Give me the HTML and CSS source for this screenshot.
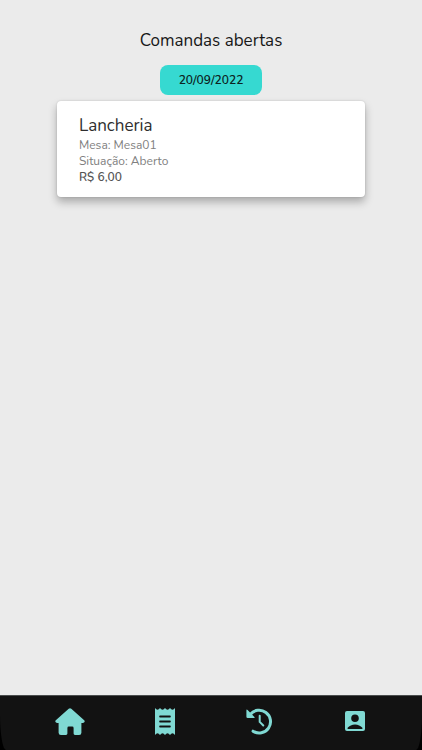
FILE: index.html
```html
<!DOCTYPE html>
<html lang="pt-BR">
<head>
<meta charset="utf-8">
<meta name="viewport" content="width=device-width, initial-scale=1">
<title>Comandas abertas</title>
<link rel="stylesheet" href="styles.css">
</head>
<body>
<main class="content">
  <h1 class="title">Comandas abertas</h1>
  <button class="date" type="button">20/09/2022</button>
  <article class="card">
    <h2 class="card-title">Lancheria</h2>
    <p class="card-line">Mesa: Mesa01</p>
    <p class="card-line">Situação: Aberto</p>
    <p class="card-line card-price">R$ 6,00</p>
  </article>
</main>
<nav class="tab-bar" aria-label="Principal">
  <div class="tabs">
    <a class="tab" href="#inicio" aria-label="Início">
      <svg width="30" height="28" viewBox="0 0 30 28"><path d="M13.7 .8Q15 -.3 16.3 .8L29.2 12.3Q30 13.2 29.5 14.1Q29.1 14.9 28 14.9H26.4V24.7Q26.4 27 24.1 27H20Q18.6 27 18.6 25.6V20Q18.6 18.6 17.2 18.6H13.8Q12.4 18.6 12.4 20V25.6Q12.4 27 11 27H6Q3.6 27 3.6 24.7V14.9H2Q.9 14.9.5 14.1Q0 13.2.8 12.3Z"/></svg>
    </a>
    <a class="tab" href="#comandas" aria-label="Comandas">
      <svg width="20" height="28" viewBox="0 0 20 28"><path fill-rule="evenodd" d="M0 0Q2.5 3.4 5 0Q7.5 3.4 10 0Q12.5 3.4 15 0Q17.5 3.4 20 0V27Q17.5 23.6 15 27Q12.5 23.6 10 27Q7.5 23.6 5 27Q2.5 23.6 0 27ZM5 7.6Q4.2 7.6 4.2 8.5T5 9.4H15Q15.8 9.4 15.8 8.5T15 7.6ZM5 12.6Q4.2 12.6 4.2 13.5T5 14.4H15Q15.8 14.4 15.8 13.5T15 12.6ZM5 17.6Q4.2 17.6 4.2 18.5T5 19.4H15Q15.8 19.4 15.8 18.5T15 17.6Z"/></svg>
    </a>
    <a class="tab" href="#historico" aria-label="Histórico">
      <svg width="28" height="28" viewBox="0 0 28 28"><path class="stroke arc" d="M4.2 6.5A11.4 11.4 0 1 1 7 23.2"/><path d="M1.6 2Q.4 1 .4 2.5V8.7Q.4 10 1.7 10H8Q9.4 10 8.4 9Z"/><path class="stroke hand" d="M13.7 7.7V13.9L17.3 17.5"/></svg>
    </a>
    <a class="tab" href="#perfil" aria-label="Perfil">
      <svg width="20" height="28" viewBox="0 0 20 28"><path fill-rule="evenodd" d="M2 3H18Q20 3 20 5V21Q20 23 18 23H2Q0 23 0 21V5Q0 3 2 3ZM10 6.5A3.8 3.8 0 1 0 10 14.1A3.8 3.8 0 1 0 10 6.5ZM2.6 21H17.4V19.8C15.7 17.7 13 16.4 10 16.4S4.3 17.7 2.6 19.8Z"/></svg>
    </a>
  </div>
</nav>
</body>
</html>
```
FILE: styles.css
```css
* {
  box-sizing: border-box;
}

body {
  margin: 0;
  min-height: 100vh;
  display: flex;
  flex-direction: column;
  background: #ebebeb;
  color: #181818;
  font-family: Nunito, Lato, sans-serif;
}

.content {
  flex: 1;
  display: flex;
  flex-direction: column;
  align-items: center;
  padding-top: 28px;
}

.title,
.card-title,
.card-line {
  margin: 0;
  font-weight: 400;
}

.title {
  font-size: 17px;
  line-height: 26px;
}

.date {
  margin: 11px 0 6px;
  padding: 0 19px;
  border: 0;
  border-radius: 8px;
  background: #36d9d1;
  color: #0c2322;
  font-family: inherit;
  font-size: 12px;
  font-weight: 600;
  line-height: 30px;
}

.card {
  width: 73%;
  padding: 12px 22px;
  border-radius: 4px;
  background: #fff;
  box-shadow: 0 5px 8px rgb(0 0 0 / 28%), 0 0 2px rgb(0 0 0 / 16%);
}

.card-title {
  font-size: 17px;
  line-height: 26px;
  color: #2e2e2e;
}

.card-line {
  font-size: 12px;
  line-height: 16px;
  color: #808080;
}

.card-title + .card-line {
  margin-top: -2px;
}

.card-price {
  color: #555;
  font-weight: 600;
}

.tab-bar {
  background: #000;
}

.tabs {
  display: flex;
  align-items: center;
  height: 55px;
  padding: 0 20px 2px 23px;
  border-top: 1px solid #4a4d4d;
  border-radius: 0 0 6px 6px / 0 0 36px 36px;
  background: #121212;
}

.tab {
  flex: 1;
  display: flex;
  justify-content: center;
  color: #80d9d3;
}

.tab svg {
  fill: currentColor;
}

.tab .stroke {
  fill: none;
  stroke: currentColor;
  stroke-linecap: round;
  stroke-linejoin: round;
}

.tab .arc {
  stroke-width: 3;
}

.tab .hand {
  stroke-width: 2;
}
```
